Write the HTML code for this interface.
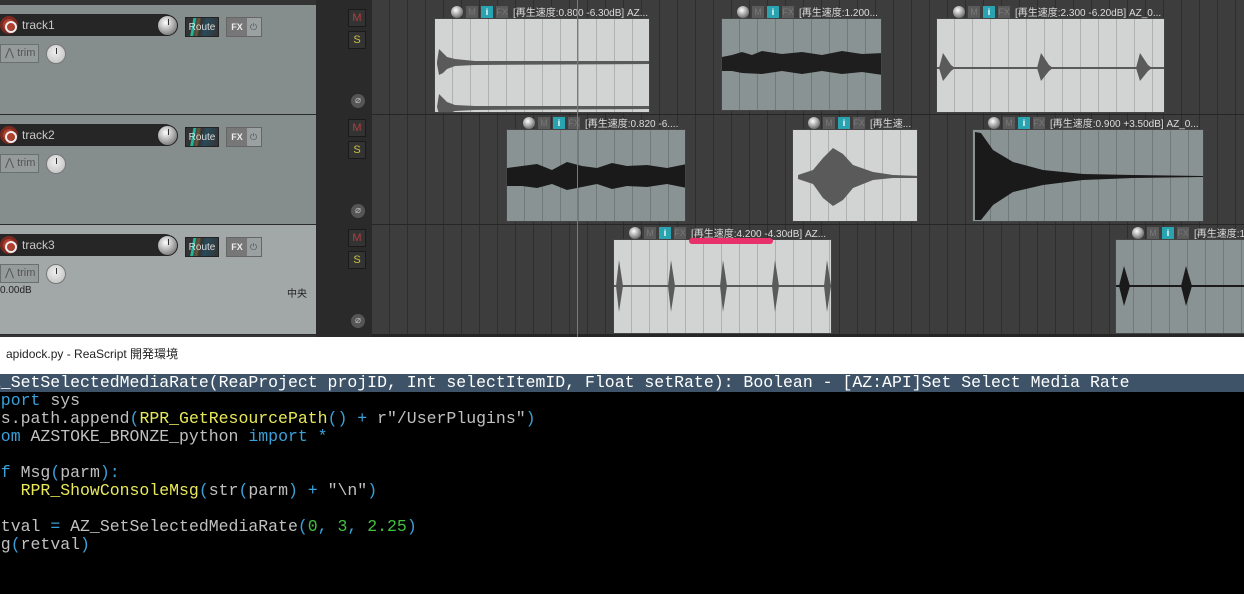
<!DOCTYPE html>
<html><head><meta charset="utf-8"><style>
*{box-sizing:border-box;margin:0;padding:0}
body{width:1244px;height:594px;overflow:hidden;background:#000;position:relative;font-family:"Liberation Sans","Noto Sans CJK JP",sans-serif}
.abs{position:absolute}
#top{left:0;top:0;width:1244px;height:337px;background:#333}
.trk{position:absolute;left:0;width:316px;background:#868d8d;border-bottom:1px solid #2a2a2a}
.name{position:absolute;left:0;top:9px;width:176px;height:22px;background:#262626;border-radius:0 11px 11px 0;color:#c8c8c8;font-size:12px;line-height:22px;padding-left:22px}
.rec{position:absolute;left:0;top:11px;width:18px;height:18px;border-radius:50%;background:#b04030;border:3px solid #7a2a20}
.rec:after{content:"";position:absolute;left:2px;top:2px;width:8px;height:8px;border-radius:50%;border:2px solid #eee}
.vol{position:absolute;left:157px;top:10px;width:21px;height:21px;border-radius:50%;background:radial-gradient(circle at 40% 35%,#fff,#999 60%,#555);border:1px solid #222}
.route{position:absolute;left:185px;top:12px;width:34px;height:20px;background:linear-gradient(100deg,#333 20%,#1fb89a 22%,#1fb89a 28%,#444 30%,#6a5a3a 38%,#333 45%,#2a4a5a 60%,#333);color:#ddd;font-size:10px;line-height:20px;text-align:center;border:1px solid #222}
.fx{position:absolute;left:226px;top:12px;width:36px;height:20px;background:#9ba0a0;border:1px solid #666;font-size:9px;color:#eee;line-height:18px}
.fx b{display:inline-block;width:20px;text-align:center;background:#777;font-weight:bold}
.fx i{font-style:normal;color:#555;padding-left:3px}
.trim{position:absolute;left:0;top:39px;width:39px;height:19px;border:1px solid #6a6f6f;background:#959b9b;color:#555;font-size:11px;line-height:17px;padding-left:4px}
.pan{position:absolute;left:46px;top:39px;width:20px;height:20px;border-radius:50%;background:radial-gradient(circle at 45% 40%,#eee,#bbb);border:1px solid #777}
.pan:after,.vol:after{content:"";position:absolute;left:50%;top:3px;width:1px;height:6px;background:#333}
.ms{position:absolute;left:348px;width:18px;height:18px;background:#333;border:1px solid #1a1a1a;font-size:11px;text-align:center;line-height:16px}
.ph{position:absolute;left:351px;width:14px;height:14px;border-radius:50%;background:#555;color:#bbb;font-size:10px;text-align:center;line-height:14px}
#arr{left:372px;top:0;width:872px;height:337px;background:#3d3d3d repeating-linear-gradient(90deg,transparent 0 17px,#2e2e2e 17px 18px)}
.lane{position:absolute;left:372px;width:872px;height:1px;background:#262626}
.clip{position:absolute;overflow:hidden;border:1px solid #444}
.lt{background:#d2d3d3 repeating-linear-gradient(90deg,transparent 0 17px,#b0b0b0 17px 18px)}
.dk{background:#8a9393 repeating-linear-gradient(90deg,transparent 0 17px,#727979 17px 18px)}
.hd{position:absolute;height:13px;display:flex;align-items:center;white-space:nowrap;font-size:10px;color:#ddd}
.hd .k{width:12px;height:12px;border-radius:50%;background:radial-gradient(circle at 40% 35%,#fff,#888 60%,#444);margin-right:3px}
.hd .b{width:12px;height:12px;background:#5a5a5a;color:#777;font-size:9px;text-align:center;line-height:12px;margin-right:3px}
.hd .i{background:#2aa3b0;color:#fff;font-weight:bold}
.hd span.t{margin-left:2px}
#title{left:0;top:337px;width:1244px;height:37px;background:#fff;font-size:12px;color:#222;line-height:34px;padding-left:6px}
#hl{left:0;top:374px;width:1244px;height:18px;background:#3e5368}
.code{position:absolute;left:-19px;font-family:"Liberation Mono",monospace;font-size:16.5px;white-space:pre;line-height:18px;color:#c0c0c0}
.y{color:#e8e85a}.c{color:#3aa0d8}.g{color:#40c040}
</style></head><body>
<div id="top" class="abs"></div>
<div id="arr" class="abs"></div>
<div class="lane" style="top:114px"></div>
<div class="lane" style="top:224px"></div>
<div class="lane" style="top:334px;height:3px"></div>
<div class="abs" style="left:316px;top:0;width:56px;height:337px;background:#2a2a2a"></div>
<div class="abs" style="left:0;top:0;width:316px;height:5px;background:#333"></div>

<div class="trk" style="top:5px;height:110px"><div class="name">track1</div><div class="rec"></div><div class="vol"></div><div class="route">Route</div><div class="fx"><b>FX</b><i>⏻</i></div><div class="trim">⋀ trim</div><div class="pan"></div></div>
<div class="trk" style="top:115px;height:110px"><div class="name">track2</div><div class="rec"></div><div class="vol"></div><div class="route">Route</div><div class="fx"><b>FX</b><i>⏻</i></div><div class="trim">⋀ trim</div><div class="pan"></div></div>
<div class="trk" style="top:225px;height:110px;background:#a2a7a7"><div class="name">track3</div><div class="rec"></div><div class="vol"></div><div class="route">Route</div><div class="fx"><b>FX</b><i>⏻</i></div><div class="trim">⋀ trim</div><div class="pan"></div>
<div class="abs" style="left:0;top:60px;font-size:10px;color:#222">0.00dB</div><div class="abs" style="left:287px;top:60px;font-size:10px;color:#222">中央</div></div>

<div class="ms" style="top:9px;color:#b04040">M</div><div class="ms" style="top:31px;color:#c8c040">S</div><div class="ph" style="top:94px">⌀</div>
<div class="ms" style="top:119px;color:#b04040">M</div><div class="ms" style="top:141px;color:#c8c040">S</div><div class="ph" style="top:204px">⌀</div>
<div class="ms" style="top:229px;color:#b04040">M</div><div class="ms" style="top:251px;color:#c8c040">S</div><div class="ph" style="top:314px">⌀</div>

<div class="clip lt" style="left:434px;top:18px;width:216px;height:95px"><svg width="216" height="95" class="abs"><path d="M2 43 L4 30 8 34 12 38 20 40 40 42 214 42 214 45 40 46 20 47 12 50 8 54 4 56 2 45Z M2 88 L4 75 8 79 12 83 20 86 40 87 214 87 214 90 40 91 20 92 12 95 4 95Z" fill="#5a5a5a"/></svg></div>
<div class="clip dk" style="left:721px;top:18px;width:161px;height:93px"><svg width="161" height="93" class="abs"><path d="M0 38 L10 36 20 33 30 36 40 32 60 35 80 33 100 36 120 32 140 35 161 34 161 56 140 53 120 55 100 52 80 55 60 52 40 55 20 54 10 52 0 52Z" fill="#1e1e1e"/></svg></div>
<div class="clip lt" style="left:936px;top:18px;width:229px;height:95px"><svg width="229" height="95" class="abs"><path d="M0 48 H229 V50 H0Z M2 49 L6 34 14 46 18 49 14 52 6 62Z M100 49 L104 34 112 46 116 49 112 52 104 62Z M199 49 L203 34 211 46 215 49 211 52 203 62Z" fill="#5a5a5a"/></svg></div>

<div class="clip dk" style="left:506px;top:129px;width:180px;height:93px"><svg width="180" height="93" class="abs"><path d="M0 38 L15 36 30 34 45 40 60 32 75 36 90 38 105 33 120 36 140 35 160 38 180 34 180 58 160 54 140 57 120 56 105 59 90 54 75 57 60 60 45 54 30 58 15 56 0 56Z" fill="#1a1a1a"/></svg></div>
<div class="clip lt" style="left:792px;top:129px;width:126px;height:93px"><svg width="126" height="93" class="abs"><path d="M5 45 L20 40 30 28 40 18 50 24 60 35 80 42 100 45 126 46 126 48 100 48 80 50 60 58 50 70 40 76 30 68 20 54 5 49Z" fill="#5a5a5a"/></svg></div>
<div class="clip dk" style="left:972px;top:129px;width:232px;height:93px"><svg width="232" height="93" class="abs"><path d="M2 2 L8 3 20 20 40 32 70 40 110 44 160 45 232 46 232 47 160 48 110 50 70 55 40 62 20 75 8 90 2 90Z" fill="#1a1a1a"/></svg></div>

<div class="clip lt" style="left:613px;top:239px;width:219px;height:95px"><svg width="219" height="95" class="abs"><path d="M0 45 H219 V47 H0Z M2 46 L5 20 9 46 5 72Z M54 46 L57 20 61 46 57 72Z M106 46 L109 20 113 46 109 72Z M158 46 L161 20 165 46 161 72Z M210 46 L213 20 217 46 213 72Z" fill="#5a5a5a"/></svg></div>
<div class="clip dk" style="left:1115px;top:239px;width:130px;height:95px"><svg width="130" height="95" class="abs"><path d="M0 45 H130 V47 H0Z M3 46 L8 26 14 46 8 66Z M65 46 L70 26 76 46 70 66Z" fill="#1a1a1a"/></svg></div>

<div class="hd" style="left:451px;top:5px"><div class="k"></div><div class="b">M</div><div class="b i">i</div><div class="b">FX</div><span class="t">[再生速度:0.800 -6.30dB] AZ...</span></div>
<div class="hd" style="left:737px;top:5px"><div class="k"></div><div class="b">M</div><div class="b i">i</div><div class="b">FX</div><span class="t">[再生速度:1.200...</span></div>
<div class="hd" style="left:953px;top:5px"><div class="k"></div><div class="b">M</div><div class="b i">i</div><div class="b">FX</div><span class="t">[再生速度:2.300 -6.20dB] AZ_0...</span></div>
<div class="hd" style="left:523px;top:116px"><div class="k"></div><div class="b">M</div><div class="b i">i</div><div class="b">FX</div><span class="t">[再生速度:0.820 -6....</span></div>
<div class="hd" style="left:808px;top:116px"><div class="k"></div><div class="b">M</div><div class="b i">i</div><div class="b">FX</div><span class="t">[再生速...</span></div>
<div class="hd" style="left:988px;top:116px"><div class="k"></div><div class="b">M</div><div class="b i">i</div><div class="b">FX</div><span class="t">[再生速度:0.900 +3.50dB] AZ_0...</span></div>
<div class="hd" style="left:629px;top:226px"><div class="k"></div><div class="b">M</div><div class="b i">i</div><div class="b">FX</div><span class="t">[再生速度:4.200 -4.30dB] AZ...</span></div>
<div class="hd" style="left:1132px;top:226px"><div class="k"></div><div class="b">M</div><div class="b i">i</div><div class="b">FX</div><span class="t">[再生速度:1</span></div>

<div class="abs" style="left:689px;top:238px;width:84px;height:6px;border-radius:3px;background:#e8306a"></div>
<div class="abs" style="left:577px;top:0;width:1px;height:337px;background:#2a9a9a"></div>

<div id="title" class="abs">apidock.py - ReaScript 開発環境</div>
<div id="hl" class="abs"></div>
<div class="code" style="top:374px;color:#fff">AZ_SetSelectedMediaRate(ReaProject projID, Int selectItemID, Float setRate): Boolean - [AZ:API]Set Select Media Rate</div>
<div class="code" style="top:392px"><span class="c">import</span> sys
sys.path.append<span class="c">(</span><span class="y">RPR_GetResourcePath</span><span class="c">()</span> <span class="c">+</span> r"/UserPlugins"<span class="c">)</span>
<span class="c">from</span> AZSTOKE_BRONZE_python <span class="c">import *</span>

<span class="c">def</span> Msg<span class="c">(</span>parm<span class="c">):</span>
    <span class="y">RPR_ShowConsoleMsg</span><span class="c">(</span>str<span class="c">(</span>parm<span class="c">)</span> <span class="c">+</span> "\n"<span class="c">)</span>

retval <span class="c">=</span> AZ_SetSelectedMediaRate<span class="c">(</span><span class="g">0</span><span class="c">,</span> <span class="g">3</span><span class="c">,</span> <span class="g">2.25</span><span class="c">)</span>
Msg<span class="c">(</span>retval<span class="c">)</span></div>
</body></html>
